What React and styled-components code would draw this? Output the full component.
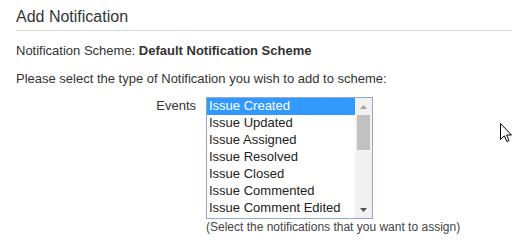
import React from 'react';
import styled, { createGlobalStyle } from 'styled-components';

const GlobalStyle = createGlobalStyle`
  html, body {
    margin: 0;
    padding: 0;
    background: #fff;
  }
  body {
    font-family: 'Liberation Sans', Arial, sans-serif;
    color: #333;
  }
`;

const Page = styled.div`
  position: relative;
  width: 512px;
  height: 243px;
  overflow: hidden;
  padding-left: 16px;
  box-sizing: border-box;
  background: #fff;
`;

const Header = styled.div`
  height: 31px;
  box-sizing: border-box;
  padding-top: 7px;
  border-bottom: 1px solid #d9d9d9;
`;

const Title = styled.h2`
  margin: 0;
  font-size: 16px;
  line-height: 20px;
  font-weight: normal;
  color: #333;
`;

const Line = styled.p`
  margin: ${(p) => p.$top}px 0 0;
  font-size: 13px;
  line-height: 16px;
  color: #333;

  strong {
    font-weight: bold;
  }
`;

const FieldRow = styled.div`
  display: grid;
  grid-template-columns: 180px 167px;
  column-gap: 10px;
  margin-top: 10px;
`;

const Label = styled.label`
  text-align: right;
  font-size: 13px;
  line-height: 13px;
  padding-top: 2px;
  color: #333;
`;

const ListBox = styled.div`
  display: flex;
  width: 167px;
  height: 122px;
  box-sizing: border-box;
  border: 1px solid #8ea9d6;
  background: #fff;
`;

const Options = styled.ul`
  flex: 1;
  margin: 0;
  padding: 0;
  list-style: none;
  overflow: hidden;
`;

const Option = styled.li`
  height: 17px;
  box-sizing: border-box;
  padding: 1px 0 3px 2px;
  font-size: 13px;
  line-height: 13px;
  white-space: nowrap;
  background: ${(p) => (p.$selected ? '#3399ff' : 'transparent')};
  color: ${(p) => (p.$selected ? '#fff' : '#222')};
`;

const ScrollBar = styled.div`
  width: 17px;
  display: flex;
  flex-direction: column;
  background: #f1f1f1;
`;

const ScrollButton = styled.div`
  height: 17px;
  display: flex;
  align-items: center;
  justify-content: center;
  flex: none;
`;

const Thumb = styled.div`
  height: 35px;
  margin: 0 2px;
  background: #c1c1c1;
`;

const Spacer = styled.div`
  flex: 1;
`;

const Hint = styled.div`
  grid-column: 2 / span 2;
  margin-top: 1px;
  font-size: 12px;
  line-height: 14px;
  color: #444;
  white-space: nowrap;
`;

const Cursor = styled.svg`
  position: absolute;
  left: 500px;
  top: 123px;
`;

const Arrow = ({ up, color }) => (
  <svg width="7" height="4" viewBox="0 0 7 4">
    <path d={up ? 'M0 4 L3.5 0 L7 4 Z' : 'M0 0 L3.5 4 L7 0 Z'} fill={color} />
  </svg>
);

const events = [
  'Issue Created',
  'Issue Updated',
  'Issue Assigned',
  'Issue Resolved',
  'Issue Closed',
  'Issue Commented',
  'Issue Comment Edited',
];

export default function App() {
  return (
    <>
      <GlobalStyle />
      <Page>
        <Header>
          <Title>Add Notification</Title>
        </Header>
        <Line $top={12}>
          Notification Scheme: <strong>Default Notification Scheme</strong>
        </Line>
        <Line $top={12}>Please select the type of Notification you wish to add to scheme:</Line>
        <FieldRow>
          <Label>Events</Label>
          <ListBox>
            <Options>
              {events.map((e, i) => (
                <Option key={e} $selected={i === 0}>
                  {e}
                </Option>
              ))}
            </Options>
            <ScrollBar>
              <ScrollButton>
                <Arrow up color="#a3a3a3" />
              </ScrollButton>
              <Thumb />
              <Spacer />
              <ScrollButton>
                <Arrow color="#505050" />
              </ScrollButton>
            </ScrollBar>
          </ListBox>
          <Hint>(Select the notifications that you want to assign)</Hint>
        </FieldRow>
        <Cursor width="12" height="20" viewBox="0 0 12 20">
          <path
            d="M0.5 0.5 L0.5 16.5 L4.3 12.8 L6.8 18.6 L9 17.6 L6.6 12 L11.5 12 Z"
            fill="#fff"
            stroke="#000"
            strokeWidth="1"
          />
        </Cursor>
      </Page>
    </>
  );
}
